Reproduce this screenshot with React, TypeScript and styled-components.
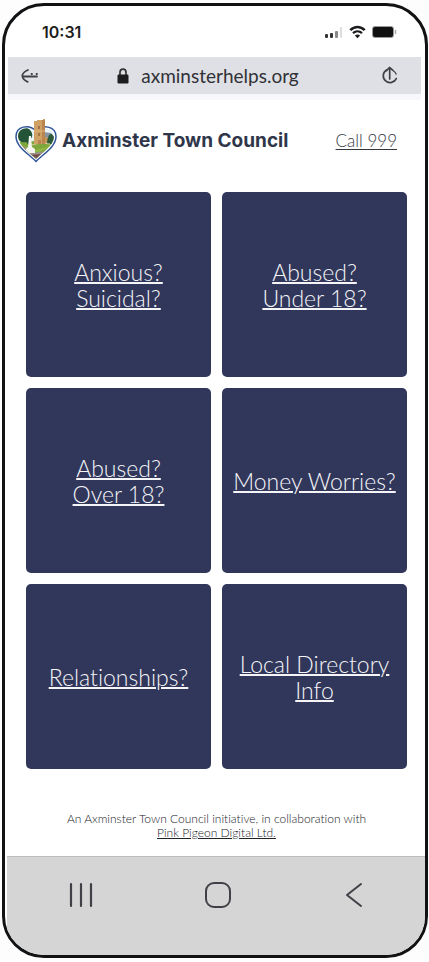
import React from 'react';
import styled, { createGlobalStyle } from 'styled-components';

const GlobalStyle = createGlobalStyle`
  *, *::before, *::after { box-sizing: border-box; }
  body {
    margin: 0;
    background: #fdfdfd;
    font-family: Lato, "Open Sans", sans-serif;
  }
`;

const Phone = styled.div`
  display: flex;
  flex-direction: column;
  min-height: calc(100vh - 7px);
  margin: 3px 1px 4px 2px;
  border: 3px solid #111214;
  border-radius: 42px;
  background: #fff;
  overflow: hidden;
`;

const StatusBar = styled.div`
  display: flex;
  align-items: center;
  justify-content: space-between;
  height: 51px;
  padding: 0 28px 0 37px;
  color: #1d1d20;
`;

const Clock = styled.time`
  font: 600 16px/20px Inter, sans-serif;
`;

const StatusIcons = styled.div`
  display: flex;
  align-items: center;
  gap: 6px;
`;

const AddressBar = styled.div`
  display: flex;
  align-items: center;
  justify-content: space-between;
  height: 37px;
  margin: 0 4px 0 3px;
  padding: 0 23px 0 13px;
  background: #dfe0e5;
  box-shadow: 0 6px 0 #f8f8fc;
`;

const IconButton = styled.button`
  display: flex;
  align-items: center;
  justify-content: center;
  padding: 0;
  border: 0;
  background: none;
  color: #404146;
`;

const Address = styled.div`
  display: flex;
  align-items: center;
  gap: 12px;
  margin-right: 4px;
  color: #303136;
  font: 400 19px/24px Lato, sans-serif;
`;

const Header = styled.header`
  display: flex;
  align-items: center;
  height: 46px;
  margin-top: 24px;
  padding: 0 28px 0 10px;
`;

const Brand = styled.h1`
  flex: 1;
  margin: 0 0 0 5px;
  color: #30364a;
  font: 700 19px/28px Inter, sans-serif;
  white-space: nowrap;
`;

const EmergencyLink = styled.a`
  color: #34373f;
  font: 300 17px/24px Lato, sans-serif;
  text-underline-offset: 2px;
  white-space: nowrap;
`;

const TileGrid = styled.main`
  display: grid;
  grid-template-columns: 1fr 1fr;
  gap: 11px;
  padding: 28px 18px 0 21px;
`;

const Tile = styled.a`
  display: flex;
  align-items: center;
  justify-content: center;
  aspect-ratio: 1;
  border-radius: 5px;
  background: #31375b;
  color: #f5f5f8;
  font: 300 23px/26px Lato, sans-serif;
  font-variant-ligatures: none;
  text-align: center;
  text-decoration-thickness: 2px;
  text-underline-offset: 1px;
  white-space: pre-line;
`;

const Credit = styled.footer`
  flex: 1;
  padding: 43px 18px 10px 21px;
  color: #202228;
  font: 300 12px/14px Lato, sans-serif;
  font-variant-ligatures: none;
  text-align: center;

  a { color: inherit; }
`;

const NavBar = styled.nav`
  display: flex;
  align-items: flex-start;
  justify-content: space-between;
  height: 99px;
  margin-left: 2px;
  padding: 24px 57px 0 60px;
  border-top: 1px solid #bcbcbc;
  background: #d5d5d5;
`;

const tiles = [
  'Anxious?\nSuicidal?',
  'Abused?\nUnder 18?',
  'Abused?\nOver 18?',
  'Money Worries?',
  'Relationships?',
  'Local Directory\nInfo',
];

const SignalIcon = () => (
  <svg width="18" height="12" viewBox="0 0 18 12" aria-label="Signal">
    <rect x="0" y="8" width="3" height="4" rx="1" fill="#333" />
    <rect x="5" y="7" width="3" height="5" rx="1" fill="#333" />
    <rect x="10" y="5" width="3" height="7" rx="1" fill="#888" />
    <rect x="15" y="1" width="2" height="11" rx="1" fill="#ddd" />
  </svg>
);

const WifiIcon = () => (
  <svg width="17" height="14" viewBox="0 0 17 14" fill="none" stroke="#1d1d20" aria-label="Wi-Fi">
    <path d="M1.3 5.2C5.4 1 11.6 1 15.7 5.2" strokeWidth="2.6" />
    <path d="M4 8.2c2.600-2.500 6.400-2.500 9 0" strokeWidth="2.300" />
    <path d="M8.500 13.300 5.900 10.600c1.500-1.400 3.700-1.400 5.200 0z" fill="#1d1d20" stroke="none" />
  </svg>
);

const BatteryIcon = () => (
  <svg width="25" height="12" viewBox="0 0 25 12" aria-label="Battery">
    <rect x=".5" y=".5" width="21" height="11" rx="2.500" fill="#111" stroke="#9a9a9a" />
    <path d="M23.500 4.500v3" stroke="#aaa" strokeWidth="1.500" strokeLinecap="round" />
  </svg>
);

const BackArrowIcon = () => (
  <svg width="18" height="14" viewBox="0 0 18 14" fill="none" stroke="currentColor" strokeWidth="1.800" strokeLinecap="round" strokeLinejoin="round">
    <path d="M7 1C4.500 1.900 1.500 4.400 1.300 6.800c.2 2.400 2.800 5 5.400 6" />
    <path d="M2 7.500h14M10.500 5h.5M15.500 5h.5" />
  </svg>
);

const LockIcon = () => (
  <svg width="12" height="16" viewBox="0 0 12 16" fill="none">
    <path d="M3 8V4.500a3 3.300 0 0 1 6 0V8" stroke="#333" strokeWidth="1.700" />
    <rect x=".5" y="6.500" width="11" height="9" rx="1.200" fill="#1d1d20" />
  </svg>
);

const ReloadIcon = () => (
  <svg width="17" height="19" viewBox="0 0 17 19" fill="none" stroke="currentColor" strokeWidth="1.700" strokeLinecap="round" strokeLinejoin="round">
    <path d="M5.500 4A6.800 6.800 0 1 0 15.300 12.500" />
    <path d="M12.500 5c1.400.8 2.300 1.900 2.700 3.200" strokeWidth="1.200" />
    <path d="M5.500 4.600 8.500 1.500 12 4.300M8.700 2v11" />
  </svg>
);

const CouncilCrest = () => (
  <svg width="42" height="44" viewBox="0 0 42 44" aria-label="Axminster crest">
    <defs>
      <clipPath id="heart">
        <path d="M21 40C15 34 3 26.500 3 17.500 3 8.500 14 6.500 20.500 13c6-6.500 18.500-4.500 18.500 5C39 26.500 27 33.500 21 40z" />
      </clipPath>
    </defs>
    <path d="M21 42.500C14 35 1 28 1 17.500 1 7 14 5 20.500 11.500 27 5 41 7 41 17.500 41 28 28 35 21 42.500z" fill="#fff" stroke="#31569a" strokeWidth="1.500" />
    <g clipPath="url(#heart)">
      <path d="M2 6h38v18H2z" fill="#e9f2f6" />
      <path d="M3 23 21 22l18 2v7L21 42 5 29z" fill="#7fa63c" />
      <path d="M3 12c2-4 9-5 12-1 3 3 3 7 0 10l-1 5-3-3c-4 1-8-1-8-5z" fill="#245438" />
      <path d="M20 14h13l3 6v5H20z" fill="#c69758" />
      <path d="m28 13 8 1 4 5-11-1z" fill="#8794a4" />
      <path d="M32 25c0-6 2-10 4-10s4 4 4 10z" fill="#2b5b38" />
      <path d="m6 26 12 6 14 1-11 10z" fill="#9b9188" />
      <path d="m9 27 11 4 15-4-10 6-8 1z" fill="#90b845" />
      <path d="m16 36 10-1-4 4z" fill="#724d45" />
      <path d="M17 26c5-2 12-2 18-1" stroke="#d1cd9d" strokeWidth="1" fill="none" />
      <path d="M14 17h2l1 11 3 2v4h-9v-4l2-2z" fill="#f4f5ef" />
    </g>
    <path d="M19 2h3v-1h6V0h2v25H19z" fill="#d0a164" />
    <path d="M27 1h3v24h-3z" fill="#b98650" />
    <path d="M23 7h2v3h-2zM23 14h2v3h-2z" fill="#a27346" />
    <path d="M23 21h3v4h-3z" fill="#b68450" />
    <path d="M19 12h11" stroke="#dfb77c" strokeWidth="1" />
  </svg>
);

export default function App() {
  return (
    <>
      <GlobalStyle />
      <Phone>
        <StatusBar>
          <Clock>10:31</Clock>
          <StatusIcons>
            <SignalIcon />
            <WifiIcon />
            <BatteryIcon />
          </StatusIcons>
        </StatusBar>
        <AddressBar>
          <IconButton type="button" aria-label="Go back"><BackArrowIcon /></IconButton>
          <Address><LockIcon /><span>axminsterhelps.org</span></Address>
          <IconButton type="button" aria-label="Reload"><ReloadIcon /></IconButton>
        </AddressBar>
        <Header>
          <CouncilCrest />
          <Brand>Axminster Town Council</Brand>
          <EmergencyLink href="tel:999">Call 999</EmergencyLink>
        </Header>
        <TileGrid>
          {tiles.map((label) => <Tile href="#" key={label}>{label}</Tile>)}
        </TileGrid>
        <Credit>
          An Axminster Town Council initiative, in collaboration with<br />
          <a href="#">Pink Pigeon Digital Ltd.</a>
        </Credit>
        <NavBar aria-label="Device navigation">
          <IconButton type="button" aria-label="Recent apps">
            <svg width="28" height="28" viewBox="0 0 28 28" fill="none" stroke="currentColor" strokeWidth="2.200" strokeLinecap="round">
              <path d="M4 3v22M14 3v22M24 3v22" />
            </svg>
          </IconButton>
          <IconButton type="button" aria-label="Home">
            <svg width="28" height="28" viewBox="0 0 28 28" fill="none" stroke="currentColor" strokeWidth="2">
              <rect x="2" y="2" width="24" height="24" rx="8" />
            </svg>
          </IconButton>
          <IconButton type="button" aria-label="Back">
            <svg width="28" height="28" viewBox="0 0 28 28" fill="none" stroke="currentColor" strokeWidth="2" strokeLinecap="round" strokeLinejoin="round">
              <path d="M21 3 7 14l14 11" />
            </svg>
          </IconButton>
        </NavBar>
      </Phone>
    </>
  );
}
